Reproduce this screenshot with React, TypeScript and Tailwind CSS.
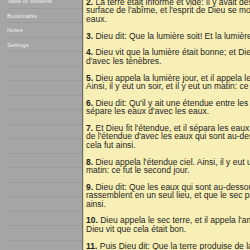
const menu = ['Table of contents', 'Bookmarks', 'Notes', 'Settings'];

// lines are broken as on the device; the pane is wider than the window
const verses: Array<[string, string[]]> = [
  ['2.', ["La terre était informe et vide: il y avait des ténèbres à la", "surface de l'abîme, et l'esprit de Dieu se mouvait au-dessus des", 'eaux.']],
  ['3.', ['Dieu dit: Que la lumière soit! Et la lumière fut.']],
  ['4.', ['Dieu vit que la lumière était bonne; et Dieu sépara la lumière', "d'avec les ténèbres."]],
  ['5.', ['Dieu appela la lumière jour, et il appela les ténèbres nuit.', 'Ainsi, il y eut un soir, et il y eut un matin: ce fut le premier jour.']],
  ['6.', ["Dieu dit: Qu'il y ait une étendue entre les eaux, et qu'elle", "sépare les eaux d'avec les eaux."]],
  ['7.', ["Et Dieu fit l'étendue, et il sépara les eaux qui sont au-dessous", "de l'étendue d'avec les eaux qui sont au-dessus de l'étendue. Et", 'cela fut ainsi.']],
  ['8.', ["Dieu appela l'étendue ciel. Ainsi, il y eut un soir, et il y eut un", 'matin: ce fut le second jour.']],
  ['9.', ['Dieu dit: Que les eaux qui sont au-dessous du ciel se', 'rassemblent en un seul lieu, et que le sec paraisse. Et cela fut', 'ainsi.']],
  ['10.', ["Dieu appela le sec terre, et il appela l'amas des eaux mers.", 'Dieu vit que cela était bon.']],
  ['11.', ['Puis Dieu dit: Que la terre produise de la verdure, de']],
];

export default function App() {
  return (
    <div className="flex h-[250px] w-[250px] overflow-hidden font-['Liberation_Sans',Arial,sans-serif]">
      {/* side menu */}
      <div className="w-[82px] shrink-0 overflow-hidden bg-[#a5a5a5]">
        <div className="-mt-[6px]">
          {Array.from({ length: 19 }).map((_, i) => (
            <div key={i} className="ml-[8px] h-[14.5px] border-b border-[#9b9b9b]">
              {menu[i] && (
                <div className="-ml-[1px] text-[6px] leading-[14px] text-[#ececec]">{menu[i]}</div>
              )}
            </div>
          ))}
        </div>
      </div>
      <div className="w-[1px] shrink-0 bg-[#6e6e6e]" />
      <div className="w-[1px] shrink-0 bg-[#d8d4a8]" />

      {/* reading pane */}
      <div className="flex-1 overflow-hidden bg-[#f7efb6]">
        <div className="-mt-[2px] pl-[2px] text-[8.5px] leading-[8.4px] text-[#1e1e1e]">
          {verses.map(([n, lines]) => (
            <p key={n} className="mb-[8.4px]">
              {lines.map((l, i) => (
                <span key={i} className="block whitespace-nowrap">
                  {i === 0 && <b>{n} </b>}
                  {l}
                </span>
              ))}
            </p>
          ))}
        </div>
      </div>
    </div>
  );
}
